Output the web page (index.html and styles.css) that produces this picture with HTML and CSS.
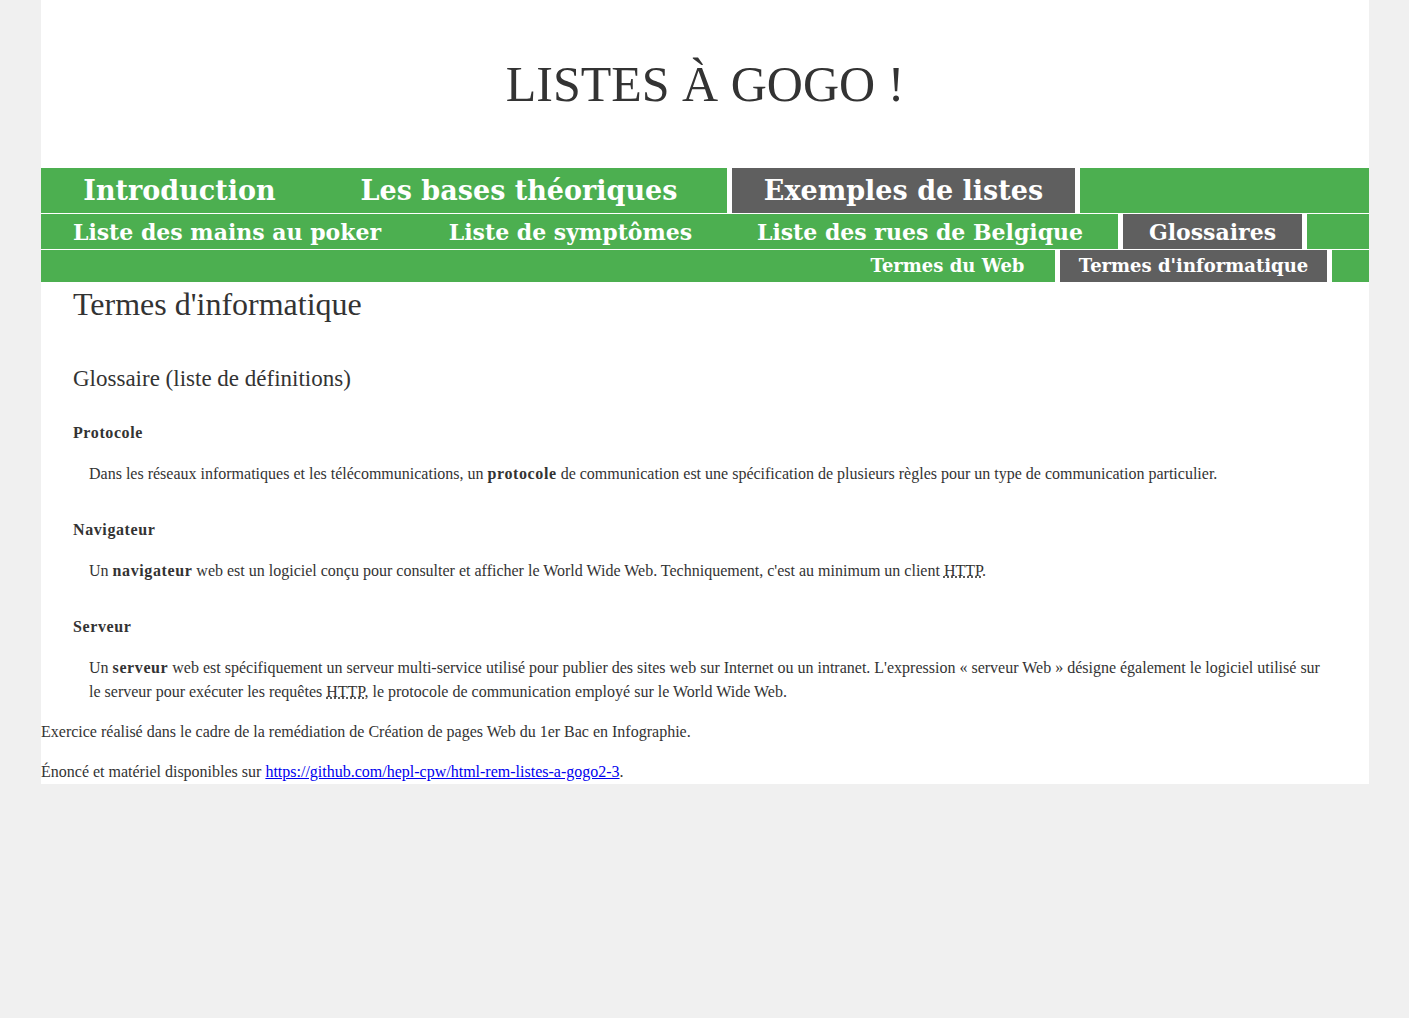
FILE: index.html
```html
<!DOCTYPE html>
<html lang="fr">
<head>
<meta charset="utf-8">
<title>Listes à gogo !</title>
<link rel="stylesheet" href="styles.css">
</head>
<body>
<div class="page">
  <header class="masthead">
    <h1 class="site-title">LISTES À GOGO !</h1>
  </header>
  <nav class="nav">
    <ul class="nav-row nav-row--main">
      <li class="nav-item nav-item--intro"><a class="nav-link" href="#">Introduction</a></li>
      <li class="nav-item nav-item--bases"><a class="nav-link" href="#">Les bases théoriques</a></li>
      <li class="nav-item nav-item--active nav-item--exemples"><a class="nav-link" href="#">Exemples de listes</a></li>
    </ul>
    <ul class="nav-row nav-row--sub">
      <li class="nav-item nav-item--poker"><a class="nav-link" href="#">Liste des mains au poker</a></li>
      <li class="nav-item nav-item--symptomes"><a class="nav-link" href="#">Liste de symptômes</a></li>
      <li class="nav-item nav-item--rues"><a class="nav-link" href="#">Liste des rues de Belgique</a></li>
      <li class="nav-item nav-item--active nav-item--glossaires"><a class="nav-link" href="#">Glossaires</a></li>
    </ul>
    <ul class="nav-row nav-row--third">
      <li class="nav-item nav-item--web"><a class="nav-link" href="#">Termes du Web</a></li>
      <li class="nav-item nav-item--active nav-item--info"><a class="nav-link" href="#">Termes d'informatique</a></li>
    </ul>
  </nav>
  <main class="content">
    <h2 class="section-title">Termes d'informatique</h2>
    <h3 class="sub-title">Glossaire (liste de définitions)</h3>
    <dl class="glossary">
      <dt class="term">Protocole</dt>
      <dd class="definition">Dans les réseaux informatiques et les télécommunications, un <strong>protocole</strong> de communication est une spécification de plusieurs règles pour un type de communication particulier.</dd>
      <dt class="term">Navigateur</dt>
      <dd class="definition">Un <strong>navigateur</strong> web est un logiciel conçu pour consulter et afficher le World Wide Web. Techniquement, c'est au minimum un client <abbr title="HyperText Transfer Protocol">HTTP</abbr>.</dd>
      <dt class="term">Serveur</dt>
      <dd class="definition">Un <strong>serveur</strong> web est spécifiquement un serveur multi-service utilisé pour publier des sites web sur Internet ou un intranet. L'expression « serveur Web » désigne également le logiciel utilisé sur le serveur pour exécuter les requêtes <abbr title="HyperText Transfer Protocol">HTTP</abbr>, le protocole de communication employé sur le World Wide Web.</dd>
    </dl>
  </main>
  <footer class="footer">
    <p class="footer-text">Exercice réalisé dans le cadre de la remédiation de Création de pages Web du 1er Bac en Infographie.</p>
    <p class="footer-text">Énoncé et matériel disponibles sur <a class="footer-link" href="https://github.com/hepl-cpw/html-rem-listes-a-gogo2-3">https://github.com/hepl-cpw/html-rem-listes-a-gogo2-3</a>.</p>
  </footer>
</div>
</body>
</html>
```
FILE: styles.css
```css
html, body {
  margin: 0;
  padding: 0;
}

body {
  background: #f0f0f0;
  color: #333333;
  font-family: "Liberation Serif", "Times New Roman", serif;
  font-size: 16px;
  line-height: 24px;
}

.page {
  width: 1328px;
  margin: 0 40px 0 41px;
  background: #ffffff;
  display: flow-root;
}

/* Header */
.masthead {
  height: 168px;
  display: flex;
  align-items: center;
  justify-content: center;
}

.site-title {
  margin: 0;
  font-size: 50px;
  font-weight: normal;
  line-height: 56px;
  color: #333333;
}

/* Navigation */
.nav {
  display: flex;
  flex-direction: column;
  gap: 1px;
  background: #ffffff;
}

.nav-row {
  list-style: none;
  margin: 0;
  padding: 0;
  display: flex;
  background: #4caf50;
  font-family: "DejaVu Serif", serif;
  font-weight: bold;
}

.nav-row--main {
  height: 45px;
  font-size: 27px;
}

.nav-row--sub {
  height: 35px;
  font-size: 22px;
}

.nav-row--third {
  height: 32px;
  font-size: 18px;
  justify-content: flex-end;
  padding-right: 37px;
}

.nav-item {
  display: flex;
  align-items: center;
  justify-content: center;
  box-sizing: border-box;
  white-space: nowrap;
}

.nav-link {
  color: #ffffff;
  text-decoration: none;
}

.nav-item--active {
  background: #5f5f5f;
  border-left: 5px solid #ffffff;
  border-right: 5px solid #ffffff;
}

.nav-item--intro { width: 277px; }
.nav-item--bases { width: 409px; padding-right: 7px; }
.nav-item--exemples { width: 353px; }

.nav-item--poker { width: 372px; }
.nav-item--symptomes { width: 315px; }
.nav-item--rues { width: 390px; padding-right: 6px; }
.nav-item--glossaires { width: 189px; }

.nav-item--web { width: 215px; }
.nav-item--info { width: 277px; }

/* Content */
.content {
  padding: 0 32px;
}

.section-title {
  margin: 4px 0 0;
  font-size: 32px;
  font-weight: normal;
  line-height: 36px;
}

.sub-title {
  margin: 43px 0 0;
  font-size: 23px;
  font-weight: normal;
  line-height: 28px;
}

.glossary {
  margin: 28px 0 0;
}

.term {
  margin: 32px 0 0;
  font-weight: bold;
  letter-spacing: 0.6px;
}

.term:first-child {
  margin-top: 0;
}

.definition {
  margin: 17px 16px 0 16px;
}

.definition strong {
  letter-spacing: 0.6px;
}

/* Footer */
.footer-text {
  margin: 16px 0;
}

.footer-text:last-child {
  margin-bottom: 0;
}

.footer-link {
  color: #0000ee;
}
```
